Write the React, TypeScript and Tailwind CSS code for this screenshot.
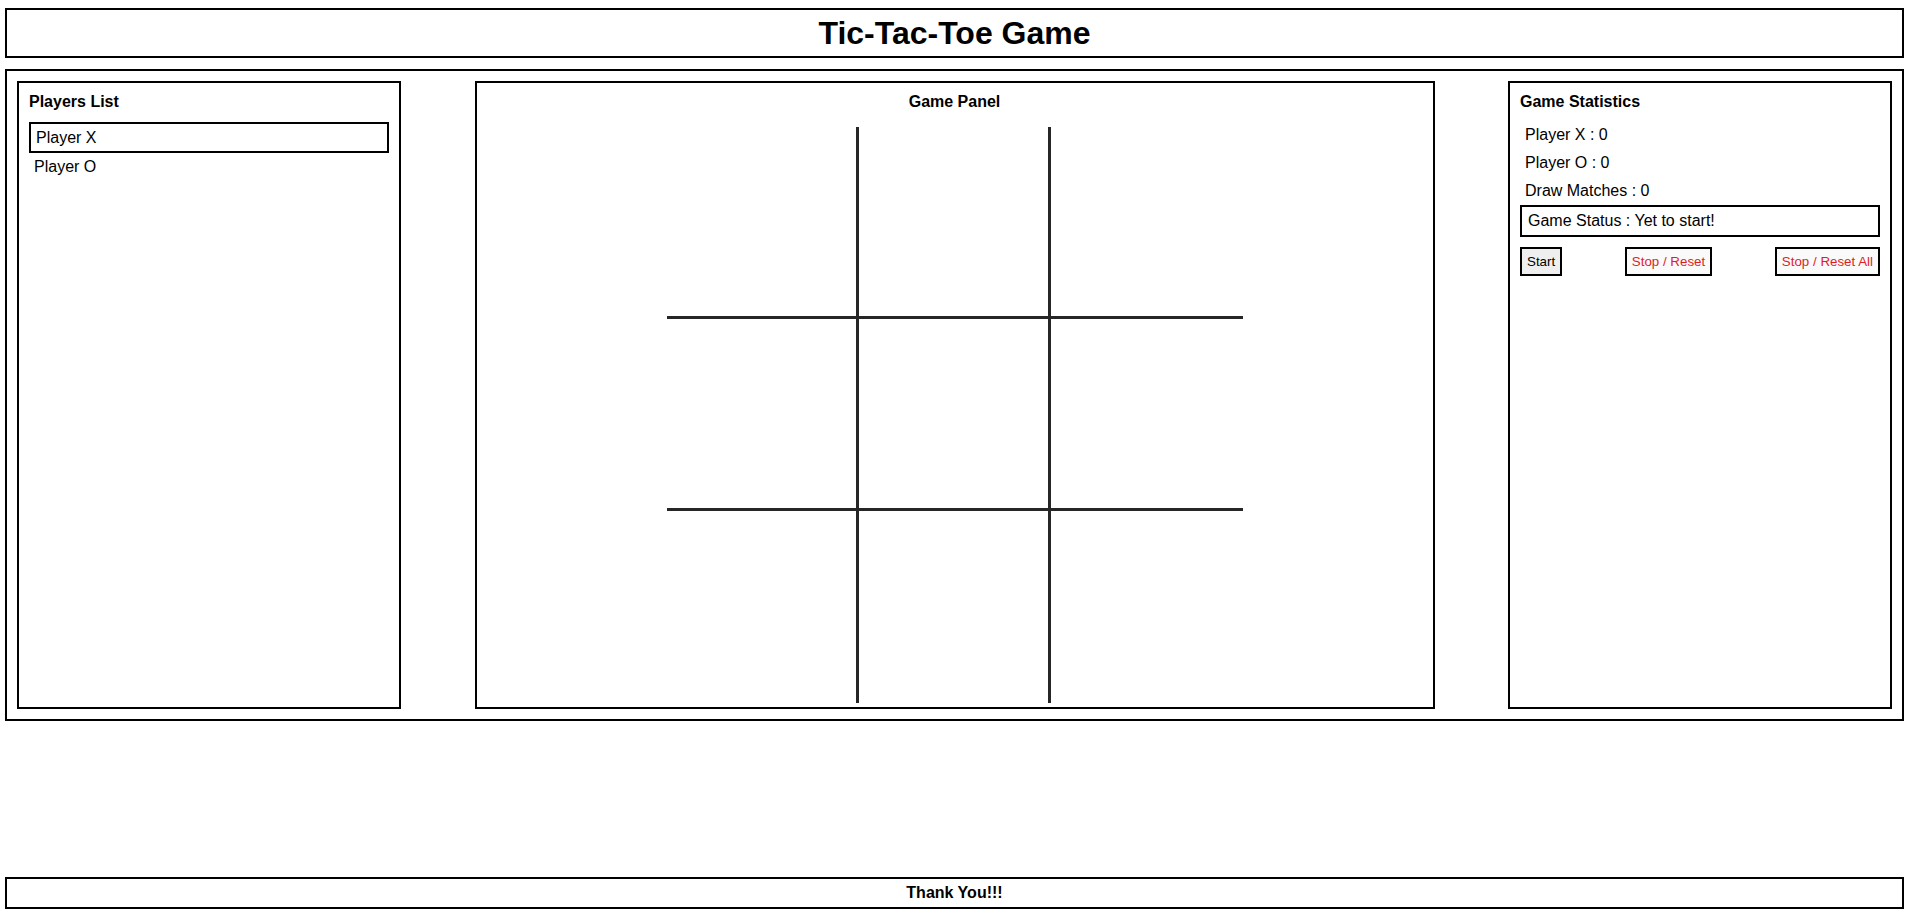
import { useState } from "react";

const font = { fontFamily: '"Liberation Sans", Arial, sans-serif' };

function Board() {
  const cells = Array.from({ length: 9 }, (_, i) => i);
  const cellClass = (i: number) => {
    const row = Math.floor(i / 3);
    const col = i % 3;
    const map: Record<string, string> = {
      "00": "border-r-[3px] border-b-[3px]",
      "01": "border-r-[3px] border-b-[3px]",
      "02": "border-b-[3px]",
      "10": "border-r-[3px] border-b-[3px]",
      "11": "border-r-[3px] border-b-[3px]",
      "12": "border-b-[3px]",
      "20": "border-r-[3px]",
      "21": "border-r-[3px]",
      "22": "",
    };
    return map[`${row}${col}`];
  };

  return (
    <div className="grid grid-cols-3 grid-rows-3 shrink-0 w-[576px] h-[576px] mt-[16px]">
      {cells.map((i) => (
        <div key={i} className={`border-[#262626] ${cellClass(i)}`} />
      ))}
    </div>
  );
}

export default function App() {
  const [selected] = useState("Player X");
  const players = ["Player X", "Player O"];

  return (
    <div className="px-[5px] pt-[8px] text-black bg-white min-h-[920px]" style={font}>
      {/* Header */}
      <header className="h-[50px] border-2 border-black flex items-center justify-center">
        <h1 className="text-[32px] font-bold leading-none">Tic-Tac-Toe Game</h1>
      </header>

      {/* Main */}
      <main className="mt-[11px] border-2 border-black p-[10px] flex justify-between">
        {/* Players */}
        <section className="w-[384px] h-[628px] border-2 border-black p-[10px]">
          <h2 className="text-base font-bold leading-[18px]">Players List</h2>
          <div className="mt-[11px] flex flex-col">
            {players.map((p) => (
              <div
                key={p}
                className={
                  p === selected
                    ? "border-2 border-black pl-[5px] py-[5px] text-base leading-[17px]"
                    : "pl-[5px] pt-[5px] text-base leading-[18px]"
                }
              >
                {p}
              </div>
            ))}
          </div>
        </section>

        {/* Game panel */}
        <section className="w-[960px] h-[628px] border-2 border-black px-[10px] pt-[10px] flex flex-col items-center overflow-hidden">
          <h2 className="text-base font-bold leading-[18px]">Game Panel</h2>
          <Board />
        </section>

        {/* Statistics */}
        <section className="w-[384px] h-[628px] border-2 border-black p-[10px]">
          <h2 className="text-base font-bold leading-[18px]">Game Statistics</h2>
          <div className="mt-[15px] flex flex-col gap-[10px] pl-[5px] text-base leading-[18px]">
            <span>Player X : 0</span>
            <span>Player O : 0</span>
            <span>Draw Matches : 0</span>
          </div>
          <div className="mt-[5px] border-2 border-black px-[6px] py-[5px] text-base leading-[18px]">
            Game Status : Yet to start!
          </div>
          <div className="mt-[10px] flex justify-between text-[13.33px] leading-[15px]">
            <button className="border-2 border-black bg-[#efefef] px-[5px] py-[5px]">Start</button>
            <button className="border-2 border-black bg-[#fafafa] px-[5px] py-[5px] text-[#e11d1d]">
              Stop / Reset
            </button>
            <button className="border-2 border-black bg-[#fafafa] px-[5px] py-[5px] text-[#e11d1d]">
              Stop / Reset All
            </button>
          </div>
        </section>
      </main>

      {/* Footer */}
      <footer className="mt-[156px] h-[32px] border-2 border-black flex items-center justify-center">
        <span className="text-base font-bold">Thank You!!!</span>
      </footer>
    </div>
  );
}
